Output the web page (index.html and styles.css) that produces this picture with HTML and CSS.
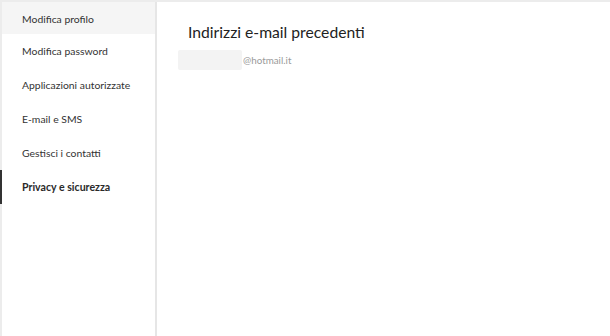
FILE: index.html
```html
<!DOCTYPE html>
<html lang="it">
<head>
    <meta charset="UTF-8">
    <meta name="viewport" content="width=device-width, initial-scale=1.0">
    <title>Privacy e sicurezza</title>
    <link rel="stylesheet" href="styles.css">
</head>
<body>
    <div class="page">
        <nav class="sidebar">
            <a class="nav-item hover">Modifica profilo</a>
            <a class="nav-item">Modifica password</a>
            <a class="nav-item">Applicazioni autorizzate</a>
            <a class="nav-item">E-mail e SMS</a>
            <a class="nav-item">Gestisci i contatti</a>
            <a class="nav-item active">Privacy e sicurezza</a>
        </nav>
        <main class="content">
            <h1 class="title">Indirizzi e-mail precedenti</h1>
            <div class="email">
                <span class="blur"></span>
                <span class="domain">@hotmail.it</span>
            </div>
        </main>
    </div>
</body>
</html>
```

FILE: styles.css
```css
html, body {
    margin: 0;
    height: 100%;
}
body {
    font-family: Lato, "Noto Sans", sans-serif;
    background: #ffffff;
    color: #262626;
}
.page {
    display: flex;
    height: 100%;
    border-top: 2px solid #ececec;
    border-left: 2px solid #ececec;
    box-sizing: border-box;
}
.sidebar {
    width: 153px;
    display: flex;
    flex-direction: column;
    border-right: 2px solid #e6e6e6;
    flex-shrink: 0;
}
.nav-item {
    display: block;
    height: 34px;
    line-height: 35px;
    padding-left: 20px;
    font-size: 10.4px;
    color: #333333;
    cursor: pointer;
}
.nav-item.hover {
    background: #f5f5f5;
    height: 32px;
    line-height: 34px;
}
.nav-item.active {
    font-weight: 700;
    color: #2a2a2a;
    font-size: 10.6px;
    margin-left: -2px;
    padding-left: 20px;
    border-left: 2px solid #333333;
}
.content {
    flex: 1;
    padding: 19px 0 0 31px;
}
.title {
    margin: 0;
    font-size: 15.7px;
    font-weight: 400;
    color: #222222;
    line-height: 22px;
}
.email {
    display: flex;
    align-items: center;
    margin: 7px 0 0 -10px;
    height: 20px;
}
.blur {
    width: 64px;
    height: 20px;
    background: #f3f3f3;
    border-radius: 2px;
}
.domain {
    font-size: 9.8px;
    color: #9a9a9a;
    margin-left: 1px;
}
```
